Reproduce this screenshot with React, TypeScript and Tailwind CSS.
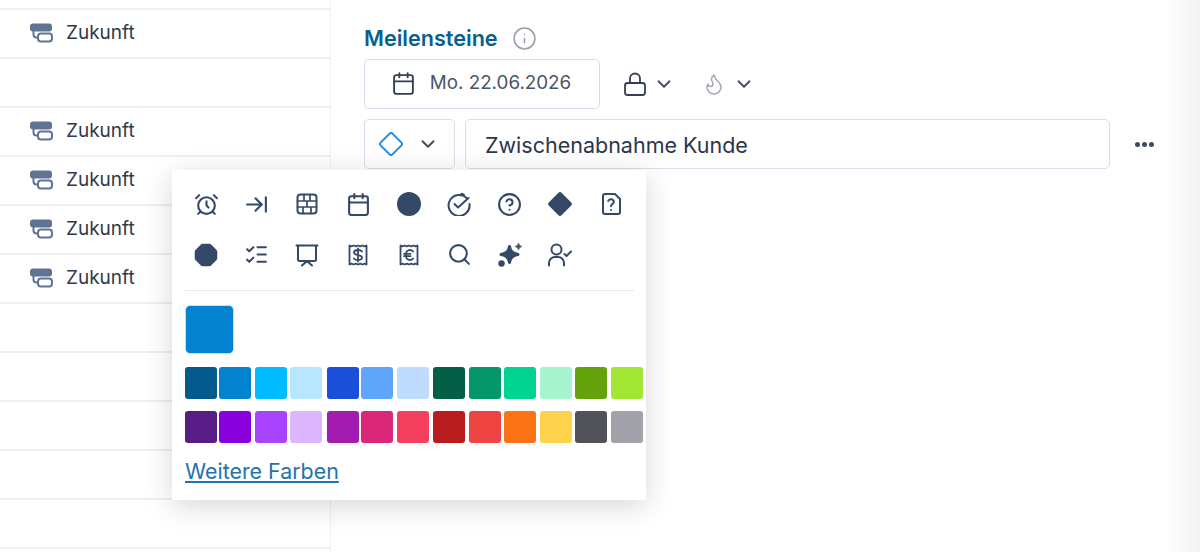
import { AlarmClock, ArrowRightToLine, Calendar, ChevronDown, CircleHelp, Flame, Info, ListChecks, Search } from 'lucide-react';

const font = { fontFamily: 'Inter, "Liberation Sans", sans-serif' };

const rows = ['Zukunft', '', 'Zukunft', 'Zukunft', 'Zukunft', 'Zukunft', '', '', '', '', ''];

const colorsTop = ['#035a8c', '#0382cf', '#00bbff', '#b8e6ff', '#1a50d8', '#60a5fa', '#bfdbfe', '#035f46', '#059669', '#00d48f', '#a7f5d0', '#65a30d', '#a3e635'];
const colorsBottom = ['#581c87', '#8800dd', '#a944fd', '#dcb6ff', '#a21caf', '#db2777', '#f43f5e', '#b91c1c', '#ef4444', '#fb7314', '#ffd24d', '#52525b', '#a1a1aa'];

function PhaseIcon() {
  return (
    <svg width="24" height="20" viewBox="0 0 24 20" fill="none">
      <rect x="1" y="0.500" width="22" height="8" rx="3" fill="#5f7394" />
      <path d="M4.500 8v3.500a3 3 0 0 0 3 3H9" stroke="#5f7394" strokeWidth="2" />
      <rect x="9" y="10.500" width="14" height="8" rx="3" stroke="#5f7394" strokeWidth="2" />
    </svg>
  );
}

function SvgIcon({ children }: { children: React.ReactNode }) {
  return (
    <svg width="24" height="24" viewBox="0 0 24 24" fill="none" stroke="#344868" strokeWidth="2" strokeLinecap="round" strokeLinejoin="round">
      {children}
    </svg>
  );
}

const Receipt = ({ children }: { children: React.ReactNode }) => (
  <SvgIcon>
    <path d="M3.500 2.500l2 .8 2.100-.8 2.200.8 2.200-.8 2.200.8 2.200-.8 2.100.8 2-.8v19l-2-.8-2.100.8-2.200-.8-2.200.8-2.200-.8-2.200.8-2.100-.8-2 .8z" strokeWidth="1.800" />
    {children}
  </SvgIcon>
);

const pickerIcons = [
  <AlarmClock size={25} color="#344868" strokeWidth={2} />,
  <ArrowRightToLine size={25} color="#344868" strokeWidth={2} />,
  <SvgIcon>
    <rect x="2.500" y="2.500" width="19" height="19" rx="3" />
    <path d="M2.500 9h19M2.500 15h19M9 2.500V9M15 2.500V9M12 9v6M8 15v6.500M16 15v6.500" strokeWidth="1.700" />
  </SvgIcon>,
  <Calendar size={25} color="#344868" strokeWidth={2} />,
  <svg width="24" height="24" viewBox="0 0 24 24"><circle cx="12" cy="12" r="12" fill="#344868" /></svg>,
  <SvgIcon>
    <path d="M20 6.500A10.500 10.500 0 1 0 22.500 12" />
    <path d="M14.500 1.800a10.500 10.500 0 0 1 2.500 1" />
    <path d="M7.500 12l3.500 3.500L21.500 6" />
  </SvgIcon>,
  <CircleHelp size={25} color="#344868" strokeWidth={2} />,
  <svg width="24" height="24" viewBox="0 0 24 24"><path d="M10.200 1l-9.200 9.200a2.500 2.500 0 0 0 0 3.600l9.200 9.200a2.500 2.500 0 0 0 3.600 0l9.200-9.200a2.500 2.500 0 0 0 0-3.600L13.800 1a2.500 2.500 0 0 0-3.600 0z" fill="#344868" /></svg>,
  <SvgIcon>
    <path d="M6 2h10l5 5v13a2 2 0 0 1-2 2H6a2 2 0 0 1-2-2V4a2 2 0 0 1 2-2z" />
    <path d="M9.200 9a2.900 2.900 0 0 1 5.600.900c0 1.900-2.800 2.500-2.800 4.300" />
    <path d="M12 18h.010" />
  </SvgIcon>,
  <svg width="24" height="24" viewBox="0 0 24 24"><path d="M8.500 3h7L21 8.500v7L15.500 21h-7L3 15.500v-7z" fill="#344868" stroke="#344868" strokeLinejoin="round" strokeWidth="4.500" /></svg>,
  <ListChecks size={25} color="#344868" strokeWidth={2} />,
  <SvgIcon>
    <path d="M1.500 2.500h21M3 2.500v14a1.500 1.500 0 0 0 1.500 1.500h15a1.500 1.500 0 0 0 1.500-1.500v-14" />
    <path d="M12 18l-5 4.500M12 18l5 4.500" />
  </SvgIcon>,
  <Receipt>
    <path d="M16 8.500c-.7-1-2.200-1.500-4-1.500-2.200 0-4 1-4 2.600 0 3.600 8 1.600 8 5 0 1.500-1.800 2.400-4 2.400-1.800 0-3.300-.6-4-1.600M12 5.500v13" strokeWidth="1.800" />
  </Receipt>,
  <Receipt>
    <path d="M16 8.500c-.8-1-1.900-1.500-3-1.500-2.500 0-4.300 2.200-4.300 5s1.800 5 4.300 5c1.100 0 2.200-.5 3-1.500M7 10.800h6.500M7 13.200h6.500" strokeWidth="1.800" />
  </Receipt>,
  <Search size={25} color="#344868" strokeWidth={2} />,
  <svg width="24" height="24" viewBox="0 0 24 24" fill="#344868">
    <path d="M11.500 3.500c.8 4.900 3 7 8.500 8-5.500 1-7.700 3.100-8.500 8-.8-4.900-3-7-8.500-8 5.500-1 7.700-3.100 8.500-8z" stroke="#344868" strokeWidth="3" strokeLinejoin="round" />
    <circle cx="3.500" cy="20.500" r="3.200" />
    <path d="M20.500 0.500v6M17.500 3.500h6" stroke="#344868" strokeWidth="2" />
  </svg>,
  <SvgIcon>
    <circle cx="8.500" cy="6.500" r="5" />
    <path d="M1 22.500v-2.500a6 6 0 0 1 6-6h3a6 6 0 0 1 6 6v2.500" />
    <path d="M16.500 11l2 2 4.500-4.500" />
  </SvgIcon>,
];

export default function App() {
  return (
    <div className="relative flex h-[552px] w-[1200px] overflow-hidden bg-white" style={font}>
      {/* Table column */}
      <div className="w-[331px] shrink-0 border-r border-[#eceff5]">
        <div className="h-[10px] border-b-2 border-[#eceff5]" />
        {rows.map((label, i) => (
          <div key={i} className="flex h-[49px] items-center gap-[13px] border-b-2 border-[#eceff5] pb-[1px] pl-[29px]">
            {label && (
              <>
                <PhaseIcon />
                <span className="text-[19px] text-[#2f3a4a]">{label}</span>
              </>
            )}
          </div>
        ))}
      </div>

      {/* Detail panel */}
      <div className="flex-1 pl-[33px] pt-[25px]">
        <div className="flex h-[26px] items-center gap-[14px]">
          <span className="text-[21.600px] font-semibold text-[#07608f]">Meilensteine</span>
          <Info size={25} color="#9aa1ab" strokeWidth={1.500} />
        </div>
        <div className="mt-[8px] flex items-center">
          <div className="flex h-[50px] w-[236px] items-center justify-center gap-[14px] rounded-[5px] border border-[#d5deea] pb-[1px] pr-[2px]">
            <Calendar size={25} color="#344052" strokeWidth={1.800} />
            <span className="text-[18.800px] text-[#4a5566]">Mo. 22.06.2026</span>
          </div>
          <div className="ml-[23px] flex items-center gap-[6px]">
            <svg width="24" height="24" viewBox="0 0 24 24" fill="none" stroke="#344052" strokeWidth="1.800">
              <rect x="2" y="11" width="20" height="12" rx="2.500" />
              <path d="M7 11V6.500a5 5 0 0 1 10 0V11" />
            </svg>
            <ChevronDown size={22} color="#3f4b5e" strokeWidth={2} />
          </div>
          <div className="ml-[27px] flex items-center gap-[7px]">
            <Flame size={24} color="#a3aab5" strokeWidth={1.500} />
            <ChevronDown size={22} color="#3f4b5e" strokeWidth={2} />
          </div>
        </div>
        <div className="mt-[10px] flex items-center">
          <div className="flex h-[50px] w-[91px] items-center gap-[14px] rounded-[5px] border border-[#d5deea] pl-[14px]">
            <svg width="24" height="24" viewBox="0 0 24 24" fill="none" stroke="#1e88e5" strokeWidth="1.900" strokeLinejoin="round">
              <path d="M10.600 1.600L1.600 10.600a2 2 0 0 0 0 2.800l9 9a2 2 0 0 0 2.800 0l9-9a2 2 0 0 0 0-2.800l-9-9a2 2 0 0 0-2.800 0z" />
            </svg>
            <ChevronDown size={22} color="#3f4b5e" strokeWidth={2} />
          </div>
          <div className="ml-[10px] flex h-[50px] w-[645px] items-center rounded-[5px] border border-[#d5deea] pl-[19px] pt-[2px] text-[21.500px] text-[#2b3647]">
            Zwischenabnahme Kunde
          </div>
          <div className="ml-[25px] flex gap-[2px]">
            <span className="h-[5px] w-[5px] rounded-full bg-[#3d4b61]" />
            <span className="h-[5px] w-[5px] rounded-full bg-[#3d4b61]" />
            <span className="h-[5px] w-[5px] rounded-full bg-[#3d4b61]" />
          </div>
        </div>
      </div>

      {/* Right edge shade */}
      <div className="w-[36px] shrink-0 bg-gradient-to-r from-white to-[#f3f3f3]" />

      {/* Icon and colour picker */}
      <div className="absolute left-[172px] top-[170px] h-[330px] w-[474px] bg-white pl-[13px] pt-[9px] shadow-[0_6px_28px_rgba(0,0,0,0.16)]">
        <div className="-ml-[4px] grid w-[456px] grid-cols-[repeat(9,50.600px)]">
          {pickerIcons.map((icon, i) => (
            <div key={i} className="flex h-[50.600px] items-center justify-center">
              {icon}
            </div>
          ))}
        </div>
        <div className="mt-[10px] h-[1px] w-[449px] bg-[#e5e9f0]" />
        <div className="mt-[14px] h-[49px] w-[49px] rounded-[5px] border border-[#cfdbe8] bg-[#0382cf]" />
        <div className="mt-[13px] grid grid-cols-[34px_36px_35px_37px_34px_36px_36px_36px_35px_36px_35px_36px_32px] gap-y-[12px]">
          {[...colorsTop, ...colorsBottom].map((c) => (
            <div key={c} className="h-[32px] w-[32px] rounded-[3px]" style={{ backgroundColor: c }} />
          ))}
        </div>
        <a className="mt-[15px] block text-[21.400px] leading-[26px] text-[#1f74ab] underline">Weitere Farben</a>
      </div>
    </div>
  );
}
